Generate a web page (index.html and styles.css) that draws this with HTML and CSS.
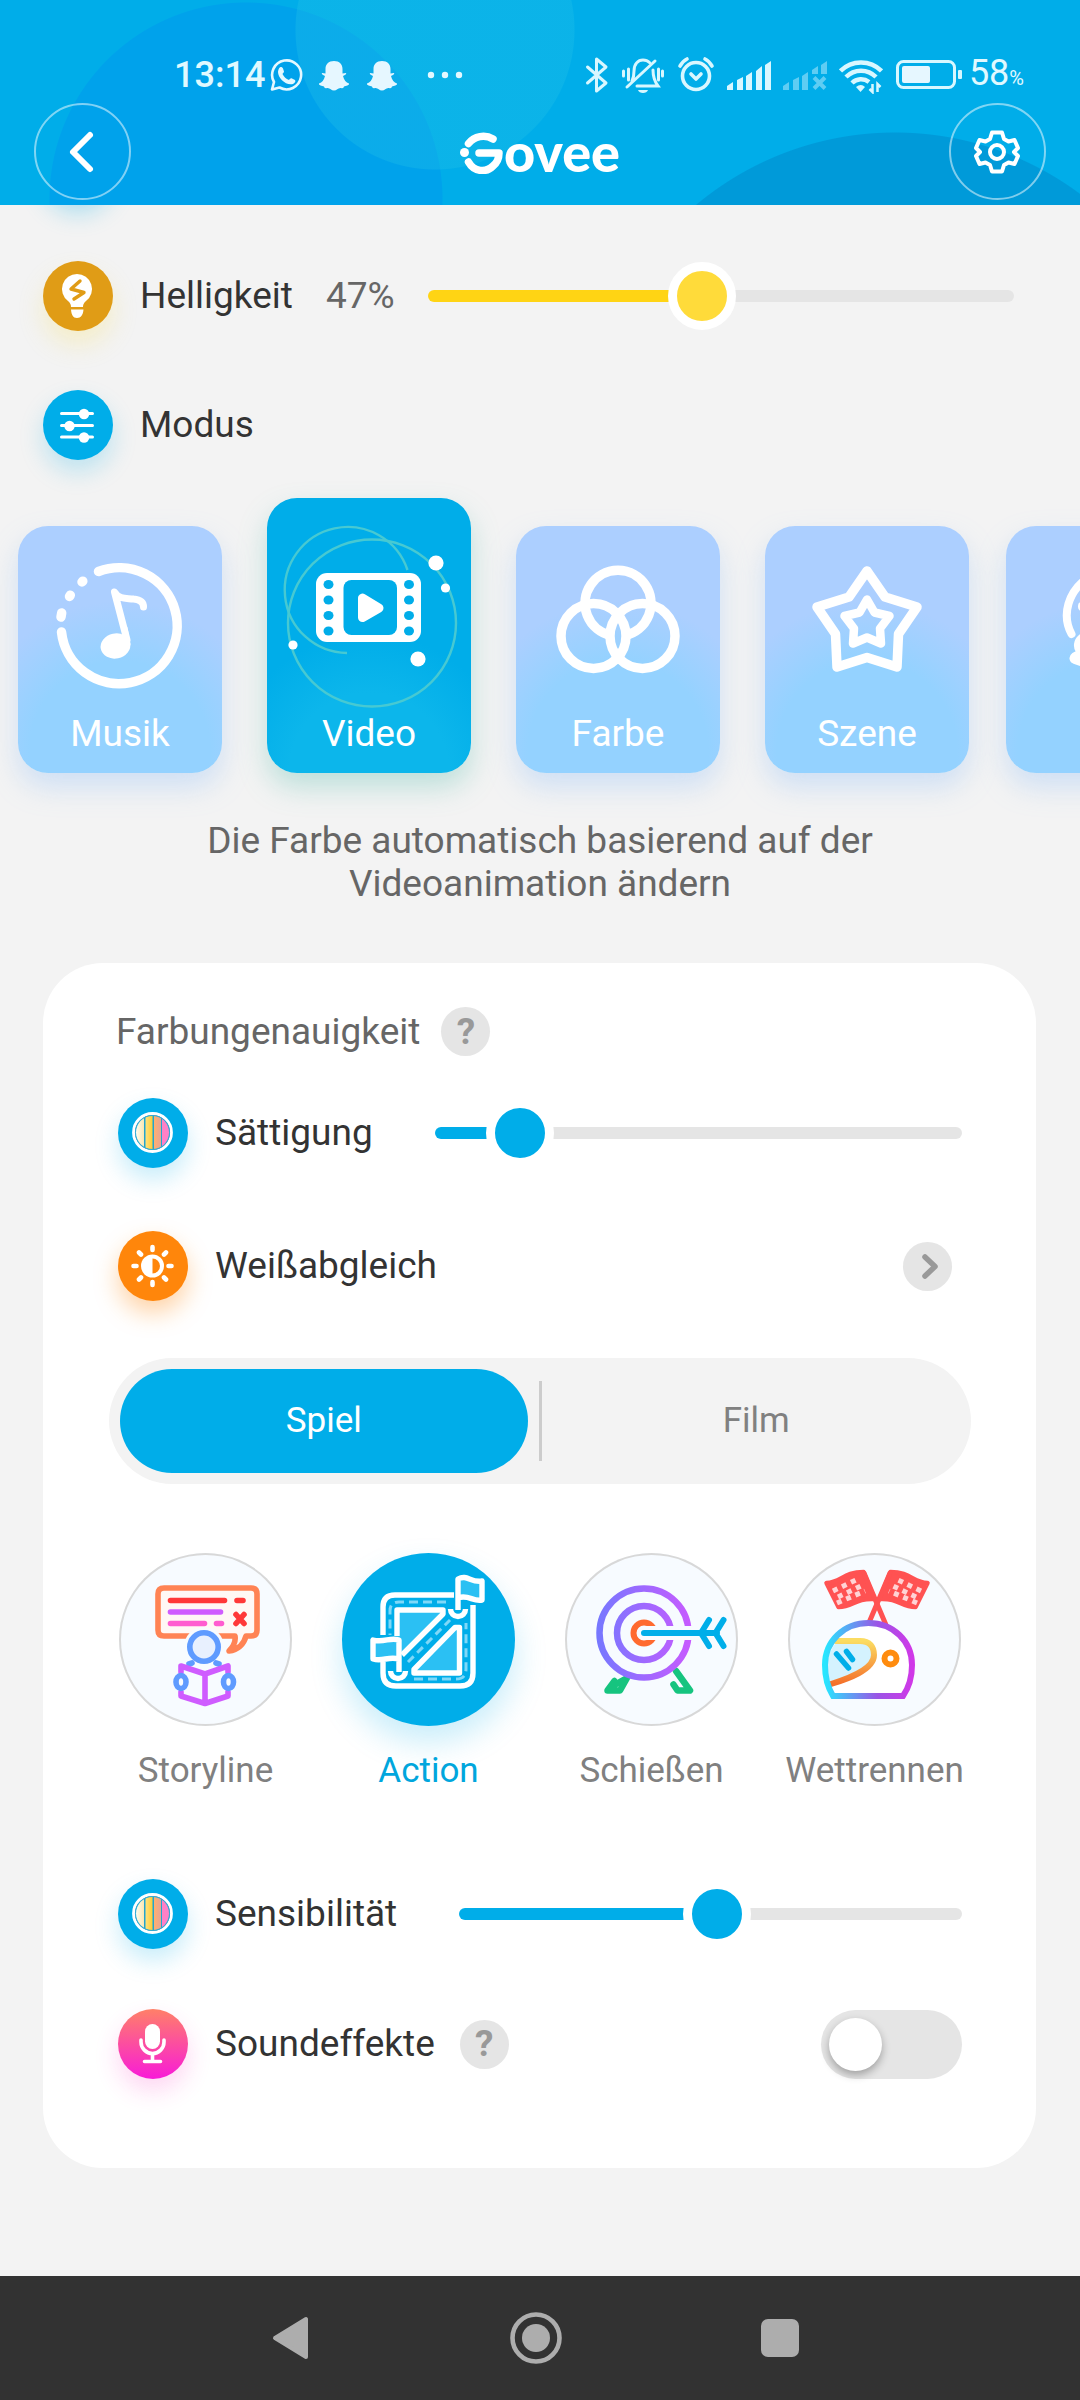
FILE: index.html
```html
<!DOCTYPE html>
<html lang="de">
<head>
<meta charset="utf-8">
<meta name="viewport" content="width=device-width, initial-scale=1">
<title>Govee</title>
<link rel="stylesheet" href="styles.css">
</head>
<body>
<header class="header">
  <div class="status">
    <div class="status-left">
      <span class="clock">13:14</span>
      <svg class="status-chat" width="34" height="38" viewBox="0 0 34 38" aria-hidden="true"><path d="M3 33.500L5 26A14.500 14.500 0 1 1 10.500 31.500Z" fill="none" stroke="#e4f8ff" stroke-width="2.600" stroke-linejoin="round"/><path d="M10 12.500c1-2 3-2 4 0l1 3c0 1-1 1.500-1.500 2.500 1.500 3 3.500 5 6.500 6 1-1 1.500-2 3-1.500l3 1.500c1 1 0 3-2 4-7 2-15-6-15-12 0-1 .5-2.500 1-3.500z" fill="#e4f8ff"/></svg>
      <svg width="34" height="38" viewBox="0 0 34 38" aria-hidden="true"><path d="M17 5c5.500 0 8.500 3.500 8.500 8v4.500l3.500-.5c1 1-1 2-3 3 1 4 3 6.500 6 7.500.5 2-3 2-5 3-.5 1.500-1 2-3 1.500-3-.5-4 2.500-7 2.500s-4-3-7-2.500c-2 .5-2.500 0-3-1.500-2-1-5.500-1-5-3 3-1 5-3.500 6-7.500-2-1-4-2-3-3l3.500.5V13c0-4.500 3-8 8.500-8z" fill="#e6f7ff"/></svg>
      <svg width="34" height="38" viewBox="0 0 34 38" aria-hidden="true"><path d="M17 5c5.500 0 8.500 3.500 8.500 8v4.500l3.500-.5c1 1-1 2-3 3 1 4 3 6.500 6 7.500.5 2-3 2-5 3-.5 1.500-1 2-3 1.500-3-.5-4 2.500-7 2.500s-4-3-7-2.500c-2 .5-2.500 0-3-1.500-2-1-5.500-1-5-3 3-1 5-3.500 6-7.500-2-1-4-2-3-3l3.500.5V13c0-4.500 3-8 8.500-8z" fill="#e6f7ff"/></svg>
      <svg class="status-more" width="36" height="38" viewBox="0 0 36 38" fill="#e4f8ff" aria-hidden="true"><circle cx="4" cy="19" r="3.200"/><circle cx="18" cy="19" r="3.200"/><circle cx="32" cy="19" r="3.200"/></svg>
    </div>
    <div class="status-right">
      <svg width="24" height="38" viewBox="0 0 24 38" fill="none" stroke="#d8f7ff" stroke-width="3" stroke-linejoin="round" stroke-linecap="round" aria-hidden="true"><path d="M2.500 11L21 27 11.500 35V3L21 11 2.500 27"/></svg>
      <svg width="44" height="38" viewBox="0 0 44 38" fill="none" stroke="#d8f7ff" stroke-width="3" stroke-linecap="round" aria-hidden="true"><path d="M11 25c1.500-3 2-6 2-10 0-7 4-11 9-11 3 0 5 1 6.500 2.500M32 14c0 7 2 12 5 16H16M6 31L34 5M2.500 15v5M7.500 13v11M37.500 13v11M41.500 15v5"/><path d="M17 34h10c-1 4-9 4-10 0z" fill="#d8f7ff" stroke="none"/></svg>
      <svg width="38" height="38" viewBox="0 0 38 38" fill="none" stroke="#d8f7ff" stroke-width="3.600" stroke-linecap="round" stroke-linejoin="round" aria-hidden="true"><circle cx="19" cy="20" r="13.500"/><path d="M14 18l5 5 5-5M3 10Q6 5 10 3M35 10Q32 5 28 3"/></svg>
      <svg width="44" height="38" viewBox="0 0 44 38" fill="#d8f7ff" aria-hidden="true"><path d="M0 34v-4l6-4v8zM10 34V24l6-3v13zM19 34V20l6-4v18zM29 34V15l6-5v24zM38 34V9l6-4v29z"/></svg>
      <svg width="44" height="38" viewBox="0 0 44 38" fill="#5fcdf3" aria-hidden="true"><path d="M0 34v-4l6-4v8zM10 34V24l6-3v13zM19 34V20l6-4v18zM29 18v-4l6-4v8zM38 18V9l6-4v13z"/><path d="M31 21.500l11 11M42 21.500l-11 11" stroke="#5fcdf3" stroke-width="4"/></svg>
      <svg width="44" height="38" viewBox="0 0 44 38" fill="none" stroke="#d8f7ff" stroke-width="4.500" aria-hidden="true"><path d="M1.500 15a29 29 0 0 1 41 0M7 21a21 21 0 0 1 30 0M13 27a13 13 0 0 1 17-1"/><path d="M17 31q5-4 9 0l-4.500 5z" fill="#d8f7ff" stroke="none"/><path d="M33.500 28v8l-3-3M38.500 36v-8l3 3" stroke-width="2.500"/></svg>
      <div class="battery">
        <svg width="68" height="38" viewBox="0 0 68 38" aria-hidden="true"><rect x="2.500" y="5.500" width="57" height="26" rx="6" fill="none" stroke="#d8f7ff" stroke-width="3"/><rect x="7" y="10" width="28" height="17" rx="2" fill="#e6f7ff"/><rect x="63" y="14" width="4" height="9" rx="1" fill="#d8f7ff"/></svg>
        <span class="battery-level">58<span class="percent">%</span></span>
      </div>
    </div>
  </div>
  <nav class="topnav" aria-label="Gerät">
    <button class="round-button" type="button" aria-label="Zurück"><svg width="40" height="48" viewBox="0 0 40 48" aria-hidden="true"><path d="M27 7L10 24l17 17" fill="none" stroke="#fff" stroke-width="6" stroke-linecap="round" stroke-linejoin="round"/></svg></button>
    <div class="brand" role="img" aria-label="Govee">
      <svg class="brand-mark" width="44" height="44" viewBox="0 0 44 44" aria-hidden="true"><circle cx="4.500" cy="22.500" r="4.500" fill="#fff"/><g fill="none" stroke="#fff" stroke-width="7.500" stroke-linecap="round" stroke-linejoin="round"><path d="M8.500 13.500A19 19 0 0 1 33 9"/><path d="M8.500 32C14 42 26 43 33 36 38 32 39 27 39 23H19"/></g></svg>
      <span class="brand-name">ovee</span>
    </div>
    <button class="round-button" type="button" aria-label="Einstellungen"><svg width="48" height="48" viewBox="0 0 48 48" fill="none" stroke="#fff" stroke-width="4" stroke-linejoin="round" aria-hidden="true"><path d="M19 4.500h10l2 6.500 4.500 2.500 6-1.500 3.500 8-4 4 4 4-3.500 8-6-1.500L31 37l-2 6.500H19L17 37l-4.500-2.500-6 1.500L3 28l4-4-4-4 3.500-8 6 1.500L17 11z"/><circle cx="24" cy="24" r="7"/></svg></button>
  </nav>
</header>

<main class="main">
  <section class="device">
    <div class="row">
      <span class="badge badge--amber"><svg viewBox="0 0 70 70" aria-hidden="true"><path d="M34 13a15 15 0 0 1 9 27c-2 2-3 3-3 6H28c0-3-1-4-3-6a15 15 0 0 1 9-27zM28 48.500h12.500C40 54 38 57 34 57s-5.500-3-6-8.500z" fill="#fff"/><path d="M37 20l-9 8 13 3.500L31 38" fill="none" stroke="#e09c16" stroke-width="3.400" stroke-linecap="round" stroke-linejoin="round"/></svg></span>
      <label class="row-label" for="brightness">Helligkeit</label>
      <output class="row-value" for="brightness">47%</output>
      <input class="slider slider--yellow" id="brightness" type="range" min="1" max="100" value="47" style="--fill:47%">
    </div>
    <div class="row">
      <span class="badge badge--blue"><svg viewBox="0 0 70 70" fill="#fff" stroke="#fff" stroke-width="3" stroke-linecap="round" aria-hidden="true"><path d="M18.500 23.500h31M18.500 35.500h31M18.500 47h31"/><g stroke="none"><circle cx="41" cy="24" r="5.200"/><circle cx="26.500" cy="36" r="5.200"/><circle cx="41" cy="47.500" r="5.200"/></g></svg></span>
      <h2 class="row-label">Modus</h2>
    </div>
  </section>

  <div class="modes">
    <div class="mode-group">
      <button class="mode" type="button">
        <svg viewBox="0 0 204 186" fill="none" stroke="#fff" stroke-width="9.500" stroke-linecap="round" stroke-linejoin="round" aria-hidden="true"><path d="M80.500 45.500A58 58 0 1 1 43.500 106M64 56l.8-.8M51.500 70.500l.8-1.300M43 91l.7-4"/><path d="M109 114L96.500 66c5 8 12 6 19 7 6 .5 10 3 10 8" stroke-width="7"/><ellipse cx="97.500" cy="120" rx="15" ry="12.500" fill="#fff" stroke="none" transform="rotate(-12 97.500 120)"/><path d="M110 118l-3-16" stroke-width="5"/></svg>
        <span>Musik</span>
      </button>
      <button class="mode mode--active" type="button" aria-pressed="true">
        <svg viewBox="0 0 204 214" fill="#fff" aria-hidden="true"><g fill="none" stroke="#47c9d2" stroke-width="2.400"><ellipse cx="105" cy="125" rx="84" ry="83.500"/><path d="M140.500 72A63 63 0 1 0 80 155"/></g><rect x="49" y="75" width="105" height="69" rx="11"/><g fill="#00ade9"><rect x="76.500" y="82" width="53.500" height="55" rx="8"/><ellipse cx="61.500" cy="86.500" rx="5" ry="4.500"/><ellipse cx="61.500" cy="102" rx="5" ry="4.500"/><ellipse cx="61.500" cy="117.500" rx="5" ry="4.500"/><ellipse cx="61.500" cy="133" rx="5" ry="4.500"/><ellipse cx="142" cy="86.500" rx="5" ry="4.500"/><ellipse cx="142" cy="102" rx="5" ry="4.500"/><ellipse cx="142" cy="117.500" rx="5" ry="4.500"/><ellipse cx="142" cy="133" rx="5" ry="4.500"/></g><path d="M95.500 100v19.500L112 110z" stroke="#fff" stroke-width="9" stroke-linejoin="round"/><circle cx="169" cy="65" r="7.600"/><circle cx="178.500" cy="90" r="4.600"/><circle cx="26" cy="147" r="4.600"/><circle cx="151" cy="161" r="7.600"/></svg>
        <span>Video</span>
      </button>
      <button class="mode" type="button">
        <svg viewBox="0 0 204 186" fill="none" stroke="#fff" stroke-width="9.500" aria-hidden="true"><path d="M94.500 109.500A33 33 0 1 1 109.500 109.500"/><circle cx="77.500" cy="110" r="32.500"/><circle cx="126.500" cy="110" r="32.500"/></svg>
        <span>Farbe</span>
      </button>
      <button class="mode" type="button">
        <svg viewBox="0 0 204 186" fill="none" stroke="#fff" stroke-linejoin="round" aria-hidden="true"><path stroke-width="9.500" d="M102 45l18 26 32 10-18.500 27L132 141l-30-9.500L72 141l-1.500-33L52 81l32-10z"/><path stroke-width="8.500" d="M102 73.500l7.500 13 15 3.500-9.500 12.500 1 15-14-6-14 6 1-15L79.500 90l15-3.500z"/></svg>
        <span>Szene</span>
      </button>
    </div>
    <button class="mode" type="button" aria-label="Weitere Modi">
      <svg viewBox="0 0 204 230" fill="none" stroke="#fff" stroke-width="8" stroke-linecap="round" aria-hidden="true"><path d="M65.500 108C55 88 63 66 80 53M76 80v1M83 110c-14 0-14 16-4 18-10 0-14 4-10 6l12 4"/></svg>
    </button>
  </div>

  <p class="hint">Die Farbe automatisch basierend auf der Videoanimation ändern</p>

  <section class="panel">
    <div class="panel-title">
      <h2 class="row-label">Farbungenauigkeit</h2>
      <button class="help" type="button" aria-label="Hilfe zur Farbungenauigkeit">?</button>
    </div>

    <div class="rows rows--color">
      <div class="row row--control">
        <span class="badge badge--blue"><svg viewBox="0 0 70 70" aria-hidden="true"><defs><clipPath id="disc"><circle cx="34.500" cy="34.500" r="17"/></clipPath><linearGradient id="cream"><stop offset="0" stop-color="#fffff6"/><stop offset="1" stop-color="#fbe7b2"/></linearGradient><linearGradient id="gold"><stop offset="0" stop-color="#ffe27c"/><stop offset="1" stop-color="#ffcd38"/></linearGradient><linearGradient id="peach"><stop offset="0" stop-color="#ffb070"/><stop offset="1" stop-color="#e9a493"/></linearGradient></defs><circle cx="34.500" cy="34.500" r="19" fill="#22a5cf" stroke="#fff" stroke-width="2.800"/><g clip-path="url(#disc)"><path d="M17 17h9v36h-9z" fill="url(#cream)"/><path d="M27.500 17h7v36h-7z" fill="url(#gold)"/><path d="M36 17h7v36h-7z" fill="url(#peach)"/><path d="M44 17h8v36h-8z" fill="#ff80c6"/></g><circle cx="34.500" cy="34.500" r="17" fill="none" stroke="#2ea9d6"/></svg></span>
        <label class="row-label" for="saturation">Sättigung</label>
        <input class="slider slider--blue" id="saturation" type="range" min="1" max="100" value="12" style="--fill:16%">
      </div>
      <div class="row row--control">
        <span class="badge badge--orange"><svg viewBox="0 0 70 70" fill="none" stroke="#fff" stroke-width="4.600" stroke-linecap="round" aria-hidden="true"><circle cx="34.500" cy="35" r="11.500" fill="#fff" stroke="none"/><path d="M34.500 27.500a7.500 7.500 0 0 1 0 15z" fill="#ff860b" stroke="none"/><path d="M34.500 16v3M34.500 51v3M15.500 35h3M50.500 35h3M21 21.500l2 2M46 46.500l2 2M48 21.500l-2 2M23 46.500l-2 2"/></svg></span>
        <span class="row-label">Weißabgleich</span>
        <button class="go" type="button" aria-label="Weißabgleich öffnen"><svg viewBox="0 0 49 49" aria-hidden="true"><path d="M22 15l10 9.500L22 34" fill="none" stroke="#999" stroke-width="5.500" stroke-linecap="round" stroke-linejoin="round"/></svg></button>
      </div>
    </div>

    <div class="segment">
      <button class="segment-item segment-item--active" type="button" aria-pressed="true">Spiel</button>
      <span class="segment-divider"></span>
      <button class="segment-item" type="button">Film</button>
    </div>

    <div class="presets">
      <button class="preset" type="button">
        <span class="preset-icon"><svg viewBox="0 0 173 173" fill="none" stroke-width="5.600" stroke-linecap="round" stroke-linejoin="round" aria-hidden="true"><path d="M45 35h87q6 0 6 6v36q0 6-6 6h-5c-2 8-8 14-17 15 4-4 7-9 6-15H45q-6 0-6-6V41q0-6 6-6z" fill="#fff8f5" stroke="#ff8354"/><path d="M51.500 47.500h54M118 47.500h6M117 61.500l8 9M125 61.500l-8 9" stroke="#ff3838"/><path d="M51.500 59h50" stroke="#cf5cff"/><path d="M51.500 70.500h34M97.500 70.500h5" stroke="#ff5cd0"/><circle cx="85" cy="94" r="20" fill="#f7fbff"/><path d="M70 111l3-1M97 110l3 1" stroke="#5f9bff"/><circle cx="85" cy="94" r="14.200" fill="#e8f0fe" stroke="#5f9bff"/><path d="M62 119v-6l24 8 23-8v6M62 139v4l24 7.500 23-7.500v-4M86 121v29" stroke="#cf5cff"/><g fill="#f7fbff" stroke="#5f9bff"><ellipse cx="62" cy="129" rx="5" ry="6.500"/><ellipse cx="109.500" cy="129" rx="5" ry="6.500"/></g></svg></span>
        <span class="preset-name">Storyline</span>
      </button>
      <button class="preset preset--active" type="button" aria-pressed="true">
        <span class="preset-icon"><svg viewBox="0 0 173 173" fill="none" stroke="#fff" stroke-width="5.400" stroke-linecap="butt" stroke-linejoin="round" aria-hidden="true"><path d="M112 42H53q-12 0-12 12v28M131 52v68q0 13-13 13H54q-13 0-13-13v-11"/><g stroke="#7fd8f8" stroke-width="3"><path d="M104 49H57q-9 0-9 9v24M72 126h42q10 0 10-10V70" stroke-dasharray="9 5"/><path d="M66 109l42-42" stroke-dasharray="8 5"/></g><path d="M55 83V57h46v4L60 102M117.500 74.500V120H72v-3.500l41-42z" fill="#2bc0f3"/><g fill="#2bc0f3"><path d="M116 57V26c9-5 13 4 24 2v19c-9 2-14-6-24-2"/><path d="M57 119V87c-9-3-15 3-26 0v19c10 3 15-3 26 0"/></g><path d="M108.500 56a7.500 7.500 0 1 0 15 0M48.500 118a7.500 7.500 0 1 0 15 0"/></svg></span>
        <span class="preset-name">Action</span>
      </button>
      <button class="preset" type="button">
        <span class="preset-icon"><svg viewBox="0 0 173 173" fill="none" stroke-linecap="round" stroke-linejoin="round" aria-hidden="true"><defs><linearGradient id="ring" gradientUnits="userSpaceOnUse" x1="31" y1="80" x2="127" y2="80"><stop offset="0" stop-color="#7578ff"/><stop offset="1" stop-color="#c85aff"/></linearGradient></defs><g stroke="#16c47f" stroke-width="6.500"><path d="M62 125l-7 12.500H42.500l7-9.500v4z"/><path d="M111 118l14 19.500h-12.500l-4-6"/></g><circle cx="79" cy="80" r="44.500" fill="#f7fbff" stroke="url(#ring)" stroke-width="6.500"/><circle cx="79" cy="80" r="27" stroke="url(#ring)" stroke-width="6.500"/><circle cx="79" cy="80" r="10.500" stroke="#ff6a2f" stroke-width="6"/><path d="M79 80h55" stroke="#f7fbff" stroke-width="14"/><path d="M79 80h73M144 67l-8 13 8 13M158.500 67l-8 13 8 13" stroke="#00aee9" stroke-width="6"/></svg></span>
        <span class="preset-name">Schießen</span>
      </button>
      <button class="preset" type="button">
        <span class="preset-icon"><svg viewBox="0 0 173 173" fill="none" stroke-linecap="round" stroke-linejoin="round" aria-hidden="true"><defs><linearGradient id="shell"><stop offset="0" stop-color="#27e6ff"/><stop offset=".6" stop-color="#9a55e6"/><stop offset="1" stop-color="#d038e8"/></linearGradient><linearGradient id="visor" x2="0" y2="1"><stop offset="0" stop-color="#fbdc62"/><stop offset="1" stop-color="#f4702a"/></linearGradient><g id="flag"><path d="M38.500 30c14 0 17-11 37-11l11 27c-20-1-21 8-36 8z" fill="#ff5252" stroke="#ff5252" stroke-width="4.500"/><path d="M76 20l22 52" stroke="#ff5252" stroke-width="5"/><path d="M45 38l27-13M50 44l27-13M49 50l28-12" stroke="#ffd3d5" stroke-width="5" stroke-linecap="butt" stroke-dasharray="5 5"/></g></defs><use href="#flag"/><use href="#flag" transform="matrix(-1 0 0 1 178 0)"/><path d="M45 143h70q9-13 9-31c0-24-19-42-43.500-42S37 88 37 112q0 18 8 31z" fill="#fff" stroke="none"/><path d="M49 88h23c10 0 14 6 14 14 0 15-27 23-43 29q-10-23 6-43z" fill="#d4f2fe"/><path d="M48 88h24c10 0 14 6 14 14 0 15-27 24-43 29" stroke="url(#visor)" stroke-width="6"/><path d="M45 143h70q9-13 9-31c0-24-19-42-43.500-42S37 88 37 112q0 18 8 31z" stroke="url(#shell)" stroke-width="6" stroke-linejoin="miter"/><path d="M48.500 101l12 14M58.500 98.500l6 8" stroke="#00aee9" stroke-width="5.500"/><circle cx="102.500" cy="105.500" r="6" stroke="#ff8c0f" stroke-width="6"/></svg></span>
        <span class="preset-name">Wettrennen</span>
      </button>
    </div>

    <div class="rows rows--sound">
      <div class="row row--control">
        <span class="badge badge--blue"><svg viewBox="0 0 70 70" aria-hidden="true"><circle cx="34.500" cy="34.500" r="19" fill="#22a5cf" stroke="#fff" stroke-width="2.800"/><g clip-path="url(#disc)"><path d="M17 17h9v36h-9z" fill="url(#cream)"/><path d="M27.500 17h7v36h-7z" fill="url(#gold)"/><path d="M36 17h7v36h-7z" fill="url(#peach)"/><path d="M44 17h8v36h-8z" fill="#ff80c6"/></g><circle cx="34.500" cy="34.500" r="17" fill="none" stroke="#2ea9d6"/></svg></span>
        <label class="row-label" for="sensitivity">Sensibilität</label>
        <input class="slider slider--blue" id="sensitivity" type="range" min="1" max="100" value="52" style="--fill:52%">
      </div>
      <div class="row row--control">
        <span class="badge badge--pink"><svg viewBox="0 0 70 70" fill="none" stroke="#fff" stroke-width="3.600" stroke-linecap="round" aria-hidden="true"><rect x="27" y="15" width="15" height="25" rx="7.500" fill="#fff" stroke="none"/><path d="M23 31v2a11.500 11.500 0 0 0 23 0v-2M34.500 45v7M26.500 52.500h16"/></svg></span>
        <label class="row-label" for="sound">Soundeffekte</label>
        <button class="help help--row" type="button" aria-label="Hilfe zu Soundeffekten">?</button>
        <input class="switch" id="sound" type="checkbox" role="switch">
      </div>
    </div>
  </section>
</main>

<footer class="system">
  <button class="system-key" type="button" aria-label="Zurück"><svg width="52" height="52" viewBox="0 0 52 52" aria-hidden="true"><path d="M9 26L40 7v38z" fill="#adadad" stroke="#adadad" stroke-width="4" stroke-linejoin="round"/></svg></button>
  <button class="system-key" type="button" aria-label="Startseite"><svg width="52" height="52" viewBox="0 0 52 52" aria-hidden="true"><circle cx="26" cy="26" r="23.500" fill="none" stroke="#adadad" stroke-width="4.600"/><circle cx="26" cy="26" r="14" fill="#adadad"/></svg></button>
  <button class="system-key" type="button" aria-label="Letzte Apps"><svg width="52" height="52" viewBox="0 0 52 52" aria-hidden="true"><rect x="7" y="7" width="38" height="38" rx="7" fill="#adadad"/></svg></button>
</footer>
</body>
</html>
```
FILE: styles.css
```css
* {
  box-sizing: border-box;
}

body {
  margin: 0;
  min-height: 100vh;
  display: flex;
  flex-direction: column;
  background: #f3f3f3;
  color: #333;
  font-family: Roboto, "Liberation Sans", sans-serif;
  font-size: 37px;
  line-height: 44px;
}

button {
  margin: 0;
  padding: 0;
  border: 0;
  background: none;
  color: inherit;
  font: inherit;
}

svg {
  display: block;
}

h2 {
  margin: 0;
  font: inherit;
}

/* Header */
.header {
  position: relative;
  z-index: 1;
  padding: 54px 0 5px;
  background:
    radial-gradient(circle at 435px 30px, rgba(35, 193, 231, 0.32) 139px, transparent 140px),
    radial-gradient(circle at 246px 199px, #00a2eb 196px, transparent 197px),
    radial-gradient(circle at calc(100% - 185px) 442px, #009ad9 309px, transparent 310px),
    #00ade9;
}

.status {
  display: flex;
  justify-content: space-between;
  height: 42px;
  padding: 0 56px 0 174px;
  color: #e0f9ff;
  font-size: 36px;
  font-weight: 500;
  line-height: 42px;
}

.status-left,
.status-right,
.battery {
  display: flex;
  align-items: center;
}

.status-left {
  gap: 14px;
}

.status-right {
  gap: 12px;
}

.status-chat {
  margin-left: -10px;
}

.status-more {
  margin-left: 14px;
}

.battery {
  gap: 6px;
}

.battery-level {
  font-weight: 400;
}

.percent {
  font-size: 20px;
}

.topnav {
  display: flex;
  align-items: center;
  justify-content: space-between;
  margin-top: 7px;
  padding: 0 34px;
}

.round-button {
  display: grid;
  place-items: center;
  width: 97px;
  height: 97px;
  border: 2px solid rgba(255, 255, 255, 0.5);
  border-radius: 50%;
}

.brand {
  display: flex;
  align-items: center;
  color: #fff;
}

.brand-name {
  font-family: Lato, sans-serif;
  font-size: 54px;
  font-weight: 900;
  line-height: 44px;
}

/* Rows of settings */
.main {
  position: relative;
  flex: 1;
  overflow: hidden;
}

/* Glow of the row that is scrolled away under the header */
.main::before {
  content: "";
  position: absolute;
  top: -74px;
  left: 43px;
  width: 70px;
  height: 70px;
  border-radius: 50%;
  box-shadow: 0 12px 24px rgba(0, 173, 233, 0.3);
}

.device {
  display: grid;
  gap: 59px;
  padding: 56px 66px 38px 43px;
}

.row {
  display: flex;
  align-items: center;
  height: 70px;
}

.row-label {
  color: #333;
}

.row-value {
  margin: 0 33px;
  color: #666;
}

.badge {
  flex: none;
  width: 70px;
  height: 70px;
  margin-right: 27px;
  border-radius: 50%;
}

.badge--amber {
  background: #e09c16;
  box-shadow: 0 14px 24px rgba(250, 225, 80, 0.25);
}

.badge--blue {
  background: #00ade9;
  box-shadow: 0 12px 24px rgba(0, 173, 233, 0.22);
}

.badge--orange {
  background: #ff860b;
  box-shadow: 0 12px 24px rgba(255, 134, 11, 0.36);
}

.badge--pink {
  background: linear-gradient(#ff8068, #f81bd8);
  box-shadow: 0 12px 24px rgba(248, 50, 190, 0.2);
}

.slider {
  flex: 1;
  min-width: 0;
  height: 68px;
  margin: 0;
  appearance: none;
  background: none;
}

.slider--blue {
  --color: #00ade9;
  --thumb: #00ade9;
  margin-left: 62px;
}

.slider--yellow {
  --color: #ffd414;
  --thumb: #ffdb3a;
}

.slider::-webkit-slider-runnable-track {
  height: 12px;
  border-radius: 6px;
  background: linear-gradient(to right, var(--color) var(--fill), #e5e5e5 var(--fill));
}

.slider::-webkit-slider-thumb {
  appearance: none;
  width: 68px;
  height: 68px;
  margin-top: -28px;
  border: 9px solid #fff;
  border-radius: 50%;
  background: var(--thumb);
}

/* Mode cards */
.modes {
  display: flex;
  align-items: flex-end;
  gap: 37px;
  padding: 0 0 46px 18px;
}

.mode-group {
  display: flex;
  align-items: flex-end;
  gap: 45px;
}

.mode {
  flex: none;
  width: 204px;
  padding-bottom: 17px;
  border-radius: 30px;
  background: radial-gradient(circle at 50% 225px, #94d2ff 90px, #accfff 150px);
  box-shadow: 0 14px 28px rgba(140, 190, 250, 0.35);
  color: #fff;
}

.mode--active {
  background: radial-gradient(circle at 50% 275px, #0cb6eb 80px, #00ade9 140px);
  box-shadow: 0 14px 28px rgba(90, 190, 175, 0.35);
}

.hint {
  max-width: 760px;
  margin: 0 auto 58px;
  padding: 0 40px;
  color: #666;
  line-height: 43px;
  text-align: center;
}

/* Settings panel */
.panel {
  margin: 0 44px 108px 43px;
  padding: 44px 65px 89px 66px;
  border-radius: 60px;
  background: #fff;
}

.panel-title {
  display: flex;
  align-items: center;
  gap: 21px;
  height: 49px;
  padding-left: 7px;
}

.panel-title .row-label {
  color: #666;
}

.help,
.go {
  display: grid;
  place-items: center;
  width: 49px;
  height: 49px;
  border-radius: 50%;
  background: #e5e5e5;
  color: #999;
  font-weight: 700;
}

.help--row {
  margin-left: 25px;
}

.go {
  margin-right: 10px;
}

.go,
.switch {
  margin-left: auto;
}

.go svg {
  width: 49px;
}

.rows {
  display: grid;
  padding: 0 9px;
}

.rows--color {
  gap: 63px;
  margin: 42px 0 57px;
}

.rows--sound {
  gap: 60px;
  margin-top: 87px;
}

.segment {
  display: flex;
  align-items: center;
  gap: 11px;
  height: 126px;
  padding: 11px;
  border-radius: 63px;
  background: #f3f3f3;
  font-size: 35px;
}

.segment-item {
  flex: 1;
  height: 104px;
  border-radius: 52px;
  color: #808080;
}

.segment-item--active {
  background: #00ade9;
  color: #fff;
}

.segment-divider {
  width: 3px;
  height: 80px;
  background: #ccc;
}

.presets {
  display: flex;
  justify-content: space-between;
  margin-top: 69px;
  padding: 0 10px;
  color: #808080;
  font-size: 35px;
  line-height: 42px;
}

.preset {
  display: flex;
  flex-direction: column;
  align-items: center;
  gap: 24px;
  width: 173px;
}

.preset-icon {
  width: 173px;
  height: 173px;
  border-radius: 50%;
  background: #f7fbff;
  box-shadow: inset 0 0 0 2px #d8d8d8;
}

.preset-name {
  white-space: nowrap;
}

.preset--active {
  color: #00a6dd;
}

.preset--active .preset-icon {
  background: #00ade9;
  box-shadow: 0 16px 32px rgba(0, 173, 233, 0.22);
}

.switch {
  width: 141px;
  height: 69px;
  margin-top: 0;
  margin-right: 0;
  margin-bottom: 0;
  padding: 8px;
  appearance: none;
  border-radius: 35px;
  background: #e5e5e5;
}

.switch::before {
  content: "";
  display: block;
  width: 53px;
  height: 53px;
  border-radius: 50%;
  background: #fff;
  box-shadow: 0 4px 8px rgba(0, 0, 0, 0.3);
}

.switch:checked {
  background: #00ade9;
}

.switch:checked::before {
  margin-left: auto;
}

/* System navigation bar */
.system {
  display: flex;
  align-items: center;
  justify-content: center;
  gap: 192px;
  height: 124px;
  padding-right: 8px;
  background: #323232;
}
```
